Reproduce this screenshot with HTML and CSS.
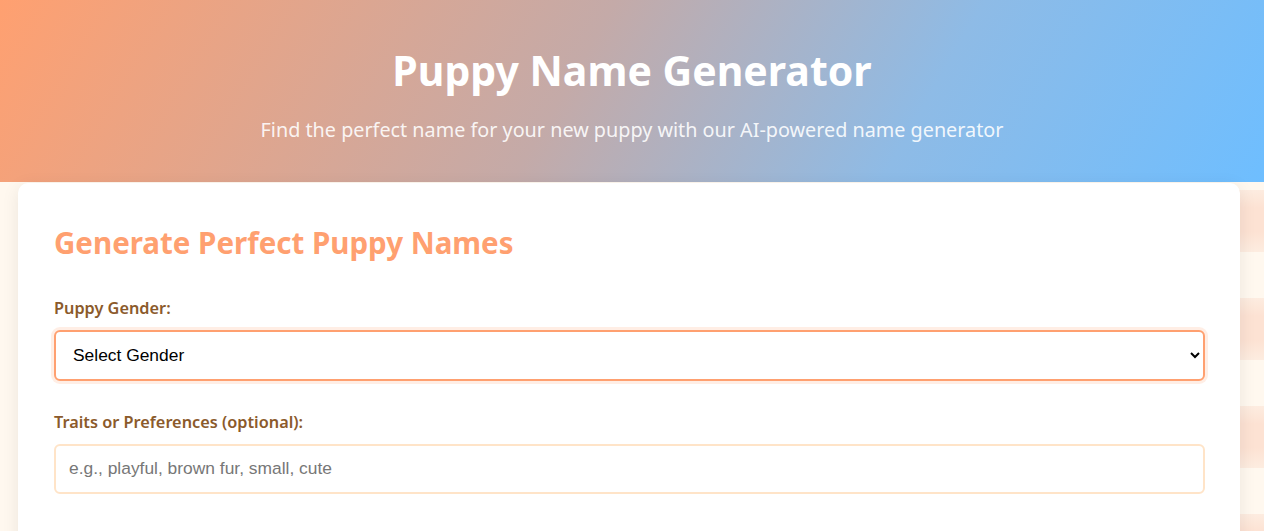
FILE: index.html
```html
<!DOCTYPE html>
<html lang="en">
<head>
    <meta charset="UTF-8">
    <meta name="viewport" content="width=device-width, initial-scale=1.0">
    <title>Puppy Name Generator</title>
    <link rel="stylesheet" href="styles.css">
</head>
<body>
    <header class="hero">
        <h1 class="hero-title">Puppy Name Generator</h1>
        <p class="hero-sub">Find the perfect name for your new puppy with our AI-powered name generator</p>
    </header>

    <main class="container">
        <section class="card">
            <h2 class="card-title">Generate Perfect Puppy Names</h2>

            <div class="form-group">
                <label for="gender">Puppy Gender:</label>
                <select id="gender" class="field field-focus">
                    <option value="">Select Gender</option>
                    <option value="male">Male</option>
                    <option value="female">Female</option>
                </select>
            </div>

            <div class="form-group">
                <label for="traits">Traits or Preferences (optional):</label>
                <input type="text" id="traits" class="field" placeholder="e.g., playful, brown fur, small, cute">
            </div>
        </section>
    </main>
</body>
</html>
```

FILE: styles.css
```css
body {
    margin: 0;
    padding: 0;
    font-family: 'Noto Sans', 'Open Sans', sans-serif;
    background-color: #fff8ef;
    background-image: linear-gradient(180deg,
        #fdece0 0px, #fde2d3 18px, #fde2d3 42px, #fdece0 62px,
        #fff8ef 62px, #fff8ef 108px);
    background-size: 40px 108px;
    background-position: right 82px;
    background-repeat: repeat-y;
}

.hero {
    height: 182px;
    box-sizing: border-box;
    padding-top: 46px;
    text-align: center;
    color: white;
    background: linear-gradient(120deg, #ffa070 0%, #c4aaa8 45%, #8ebbe6 72%, #6ebeff 100%);
}

.hero-title {
    margin: 0;
    font-size: 41px;
    font-weight: bold;
    line-height: 1.2;
}

.hero-sub {
    margin: 21px 0 0 0;
    font-size: 19.8px;
    color: rgba(255, 255, 255, 0.9);
}

.container {
    padding: 1px 24px 0 18px;
}

.card {
    margin-top: 0;
    background: white;
    border-radius: 10px;
    box-shadow: 0 4px 18px rgba(0, 0, 0, 0.08);
    padding: 40px 35px 40px 36px;
    min-height: 400px;
    box-sizing: border-box;
}

.card-title {
    margin: 0 0 34px 0;
    color: #ffa070;
    font-size: 29.5px;
    font-weight: bold;
    line-height: 1.35;
}

.form-group {
    margin-bottom: 30px;
}

.form-group label {
    display: block;
    margin-bottom: 11px;
    color: #8b5a2b;
    font-size: 16.3px;
    font-weight: 600;
}

.field {
    display: block;
    width: 100%;
    box-sizing: border-box;
    height: 50px;
    padding: 0 13px;
    font-family: 'Liberation Sans', Arial, sans-serif;
    font-size: 17.4px;
    color: black;
    background: white;
    border: 2px solid #ffe4c8;
    border-radius: 6px;
    outline: none;
}

select.field {
    height: 51px;
    padding: 0 13px;
}

.field::placeholder {
    color: #777;
}

.field-focus {
    border-color: #ffa070;
    box-shadow: 0 0 0 3px rgba(255, 160, 112, 0.18);
}
```
